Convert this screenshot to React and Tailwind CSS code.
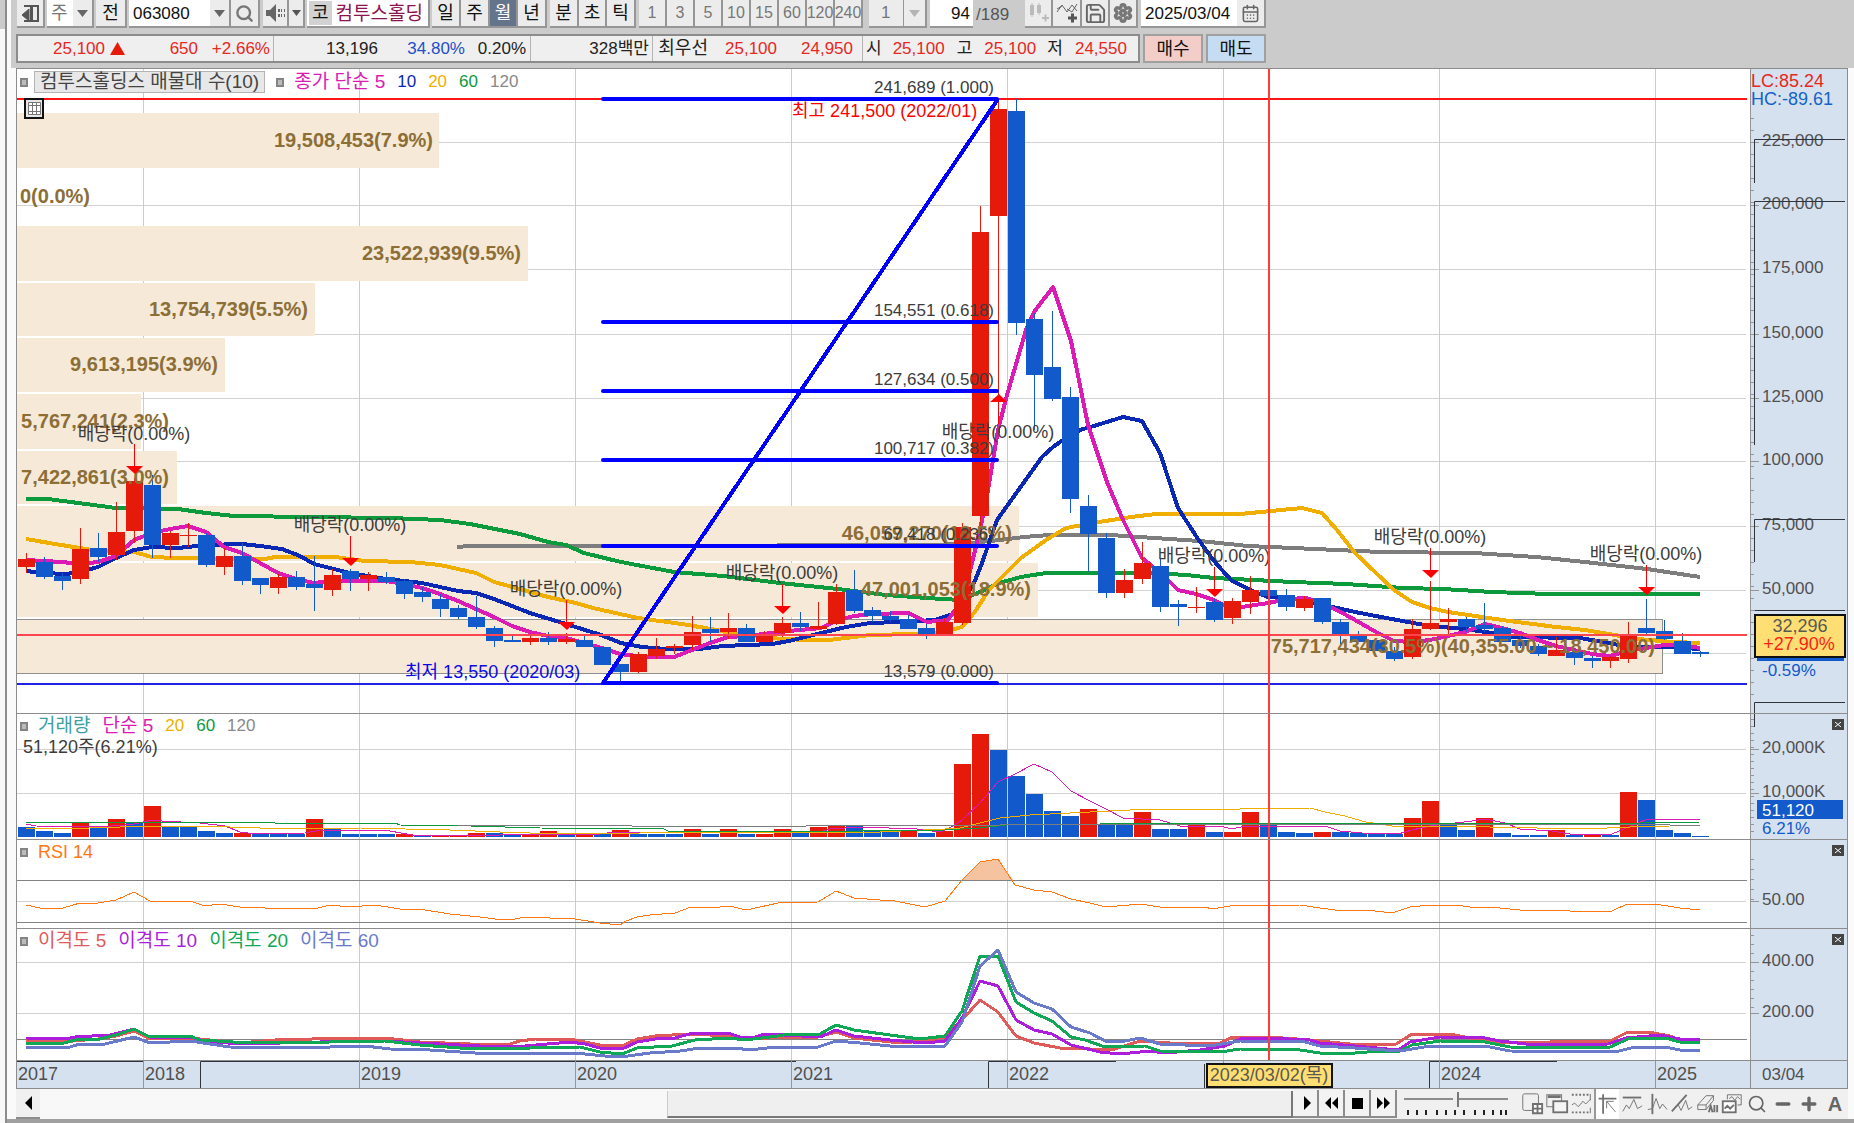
import React from "react";
import clsx from "clsx";
import { Search, Settings, Save, CalendarDays, Minus, Plus } from "lucide-react";

// One bar per month, June 2017 to March 2025
const FIRST_X = 26;
const STEP = 18;
const barX = (i) => FIRST_X + STEP * i;

// The 2023 label is left out because the cursor date covers it
const years = [
  [143, "2018"], [359, "2019"], [575, "2020"], [791, "2021"],
  [1007, "2022"], [1223, ""], [1439, "2024"], [1655, "2025"],
];

// [rising, body top, body bottom, high, low]
const candles = [
  [1, 559, 567, 553, 573], [0, 562, 577, 557, 579], [0, 576, 581, 573, 590], [1, 549, 579, 528, 584],
  [0, 548, 557, 533, 562], [1, 532, 555, 502, 560], [1, 481, 531, 478, 543], [0, 485, 545, 475, 558],
  [1, 533, 545, 531, 558], [1, 535, 536, 523, 547], [0, 535, 565, 533, 567], [1, 556, 567, 548, 575],
  [0, 556, 581, 543, 585], [0, 578, 585, 578, 594], [1, 577, 588, 574, 594], [0, 577, 587, 571, 590],
  [0, 584, 588, 556, 611], [1, 575, 590, 569, 596], [0, 571, 579, 569, 591], [1, 575, 579, 572, 591],
  [0, 577, 582, 572, 584], [0, 581, 594, 579, 599], [0, 592, 597, 587, 602], [0, 599, 609, 594, 617],
  [0, 608, 617, 605, 619], [0, 617, 627, 596, 629], [0, 628, 641, 626, 647], [0, 640, 642, 634, 642],
  [1, 638, 642, 636, 645], [0, 638, 642, 632, 645], [1, 639, 642, 633, 644], [0, 640, 647, 634, 647],
  [0, 647, 665, 647, 665], [0, 664, 672, 664, 682], [1, 654, 672, 652, 673], [1, 649, 656, 638, 659],
  [1, 646, 648, 644, 654], [1, 632, 645, 616, 650], [0, 629, 633, 617, 642], [1, 628, 632, 613, 639],
  [0, 628, 642, 624, 642], [1, 634, 642, 631, 642], [1, 623, 633, 617, 637], [0, 623, 627, 612, 631],
  [1, 626, 629, 602, 630], [1, 592, 624, 584, 625], [0, 590, 611, 570, 613], [0, 610, 616, 607, 622],
  [0, 616, 620, 611, 622], [0, 619, 629, 615, 629], [0, 628, 634, 624, 639], [1, 622, 634, 618, 636],
  [1, 527, 623, 523, 625], [1, 232, 516, 206, 529], [1, 109, 216, 100, 395], [0, 111, 323, 99, 335],
  [0, 319, 375, 313, 430], [0, 367, 399, 311, 401], [0, 397, 499, 387, 513], [0, 506, 534, 495, 572],
  [0, 538, 593, 533, 598], [1, 580, 593, 569, 598], [1, 563, 579, 542, 584], [0, 566, 607, 559, 612],
  [0, 604, 607, 600, 626], [1, 607, 608, 587, 613], [0, 602, 620, 599, 622], [1, 601, 618, 598, 624],
  [1, 590, 602, 576, 614], [0, 590, 596, 575, 603], [0, 595, 607, 589, 611], [1, 599, 608, 596, 611],
  [0, 598, 622, 598, 624], [0, 622, 636, 619, 644], [0, 634, 642, 631, 642], [0, 640, 651, 640, 651],
  [0, 651, 659, 647, 661], [1, 629, 657, 619, 659], [1, 623, 629, 581, 630], [1, 619, 622, 608, 634],
  [0, 619, 627, 617, 632], [0, 625, 629, 603, 632], [0, 628, 642, 626, 642], [0, 640, 646, 635, 648],
  [0, 646, 654, 644, 656], [1, 650, 656, 637, 656], [0, 652, 658, 650, 665], [0, 658, 661, 656, 668],
  [1, 657, 661, 656, 668], [1, 634, 659, 622, 663], [0, 628, 633, 599, 636], [0, 631, 639, 620, 640],
  [0, 641, 654, 633, 654], [0, 652, 654, 651, 657],
];

// [rising, bar top]
const volumes = [
  [0, 827], [0, 831], [0, 833], [1, 822], [0, 826], [1, 819], [0, 822], [1, 806], [0, 827], [0, 827],
  [0, 831], [0, 833], [1, 833], [0, 833], [0, 834], [0, 834], [1, 819], [0, 828], [0, 834], [0, 834],
  [0, 834], [1, 834], [0, 835], [1, 835], [1, 835], [1, 833], [0, 833], [0, 834], [1, 834], [1, 831],
  [0, 834], [1, 834], [0, 834], [1, 830], [0, 834], [0, 834], [0, 834], [1, 829], [0, 834], [1, 829],
  [0, 834], [1, 834], [1, 829], [0, 832], [1, 827], [1, 825], [0, 825], [0, 831], [0, 830], [1, 831],
  [0, 833], [1, 831], [1, 764], [1, 734], [0, 750], [0, 776], [0, 794], [0, 811], [0, 816], [1, 809],
  [0, 824], [0, 824], [1, 812], [0, 829], [0, 829], [1, 824], [0, 832], [1, 832], [1, 812], [0, 824],
  [0, 832], [0, 833], [1, 832], [0, 832], [0, 833], [0, 834], [0, 834], [1, 818], [1, 801], [0, 824],
  [0, 830], [1, 818], [0, 833], [0, 835], [0, 835], [1, 830], [0, 835], [1, 834], [0, 835], [1, 792],
  [0, 800], [0, 830], [0, 833], [0, 836],
];

const priceAverages = [
  { stroke: "#7d7d7d", points: "457,547 470,546 620,546 935,545 970,543 1000,540 1024,537 1050,535 1110,535 1140,537 1169,539 1200,541 1248,546 1315,549 1381,552 1474,553 1536,557 1585,562 1647,569 1700,577" },
  { stroke: "#0d9a3c", points: "26,499 48,499 116,508 178,509 206,513 234,516 390,518 440,520 470,524 520,534 548,542 566,545 584,553 621,562 674,572 723,576 780,583 838,589 886,595 927,598 960,600 980,592 999,583 1021,577 1046,573 1152,573 1186,575 1214,578 1293,582 1346,584 1403,588 1443,589 1492,592 1549,594 1700,594" },
  { stroke: "#f0ae00", points: "26,539 55,544 80,548 98,551 134,552 152,557 175,558 242,559 265,559 275,557 335,557 365,561 410,562 440,565 476,573 494,582 520,589 548,597 576,603 593,608 638,618 682,624 711,629 731,633 768,638 805,640 829,640 870,635 915,634 944,632 962,627 974,613 989,590 999,580 1021,558 1046,540 1066,528 1099,522 1131,517 1156,514 1240,514 1302,508 1322,513 1337,530 1355,553 1376,573 1394,590 1412,602 1430,608 1448,612 1502,620 1556,627 1585,630 1603,633 1638,639 1673,642 1700,643" },
  { stroke: "#0a28b4", points: "26,571 44,573 66,574 80,572 98,567 116,558 134,550 152,547 178,548 206,545 242,544 260,546 282,549 300,556 314,564 350,573 386,579 422,583 458,591 476,593 494,599 530,613 566,624 601,635 621,643 642,647 666,649 699,649 723,646 772,644 789,641 821,633 846,627 870,623 899,622 935,620 956,613 974,583 982,563 989,543 997,520 1017,492 1042,457 1053,447 1063,440 1080,430 1097,425 1123,417 1142,421 1160,453 1178,508 1198,539 1214,561 1231,580 1250,590 1268,597 1293,598 1324,605 1355,612 1381,617 1408,622 1430,626 1465,629 1492,633 1514,637 1580,638 1603,642 1629,647 1669,647 1700,649" },
  { stroke: "#dc1ab4", points: "26,560 62,562 80,564 98,562 116,556 134,540 152,533 170,529 188,526 206,532 224,547 242,553 260,563 278,573 296,579 314,583 332,581 386,581 404,584 422,588 440,594 458,601 476,609 494,617 512,626 530,632 548,636 566,638 584,643 602,648 620,654 646,657 674,657 692,650 710,643 728,637 746,636 789,631 821,628 838,620 854,616 872,614 908,613 919,618 927,622 948,620 962,600 970,571 980,530 988,490 998,430 1007,395 1026,330 1034,312 1053,287 1071,341 1088,425 1107,482 1123,520 1142,558 1152,566 1170,582 1178,590 1196,594 1214,600 1226,606 1242,607 1268,603 1288,599 1306,598 1319,602 1337,610 1355,620 1376,632 1394,641 1412,642 1430,640 1448,636 1465,632 1485,624 1502,628 1520,633 1538,640 1556,646 1574,650 1592,654 1610,656 1628,651 1646,648 1664,645 1682,645 1700,648" },
];

const volumeAverages = [
  { stroke: "#dc1ab4", points: "26,824 36,826 98,827 125,825 134,824 152,820 162,821 200,823 225,826 240,832 255,834 305,833 320,830 390,831 412,835 500,835 600,834 615,832 700,832 820,832 830,829 860,827 917,829 940,832 948,829 962,820 980,803 998,782 1015,774 1034,764 1052,772 1071,791 1090,801 1106,809 1123,818 1160,820 1180,826 1220,826 1232,829 1245,826 1325,826 1340,831 1362,833 1398,834 1412,830 1430,826 1472,821 1485,819 1505,823 1520,829 1552,831 1570,834 1612,834 1626,828 1645,820 1655,819 1700,819" },
  { stroke: "#f0ae00", points: "26,829 90,828 150,826 200,826 260,828 360,828 450,830 500,832 560,834 640,833 800,832 880,832 945,829 960,828 980,823 1000,818 1030,815 1070,813 1130,810 1240,809 1310,808 1325,812 1345,816 1355,819 1366,822 1392,826 1490,827 1584,829 1630,827 1670,826" },
  { stroke: "#0d9a3c", points: "26,822 270,822 275,823 395,823 400,825 470,826 540,828 664,829 668,831 860,831 945,830 980,828 1005,825 1100,824 1640,823 1700,822" },
  { stroke: "#7d7d7d", points: "458,825 628,825 632,826 806,826 812,825 1000,825 1300,824 1640,824 1700,826" },
];

const rsi = [
  { stroke: "#ff7814", points: "26,905 40,908 63,908 80,903 98,903 116,900 134,892 150,901 190,901 205,906 220,904 240,907 265,908 318,908 330,905 350,907 375,905 400,909 425,910 450,914 480,917 495,919 515,919 525,917 575,919 600,923 620,925 626,921 637,917 650,915 675,913 691,907 720,907 730,906 746,910 760,907 778,903 818,902 836,891 854,898 880,900 895,901 925,907 945,901 962,880 980,862 998,859 1015,885 1034,890 1052,892 1071,899 1090,903 1106,907 1140,904 1160,907 1205,907 1212,909 1230,906 1300,905 1320,908 1335,910 1367,910 1392,913 1410,907 1430,905 1456,905 1470,907 1500,908 1530,911 1550,910 1590,912 1612,911 1627,904 1655,904 1680,908 1700,910" },
];

const disparity = [
  { stroke: "#e05a5a", points: "26,1040 60,1042 98,1039 116,1036 134,1031 150,1039 190,1038 240,1043 275,1040 350,1038 385,1038 420,1042 470,1044 510,1044 520,1041 535,1039 575,1040 600,1045 622,1046 637,1039 655,1036 690,1034 730,1036 746,1039 790,1037 818,1037 836,1032 854,1038 900,1043 925,1041 945,1037 962,1020 980,1000 998,1012 1016,1036 1034,1043 1060,1048 1090,1049 1115,1049 1140,1041 1170,1043 1220,1043 1233,1037 1270,1037 1310,1040 1350,1044 1396,1044 1412,1034 1450,1034 1470,1038 1500,1042 1550,1042 1610,1041 1628,1032 1648,1032 1670,1036 1680,1040 1700,1040" },
  { stroke: "#aa1edc", points: "26,1038 65,1039 75,1037 110,1035 134,1029 150,1037 190,1037 205,1041 240,1044 320,1042 385,1041 420,1043 480,1046 525,1046 570,1042 585,1044 600,1048 622,1049 637,1042 655,1039 675,1038 693,1033 728,1033 740,1037 755,1037 765,1034 820,1037 836,1030 854,1036 890,1040 925,1043 945,1041 962,1018 980,981 998,986 1016,1020 1034,1030 1052,1034 1071,1045 1100,1052 1120,1054 1150,1051 1165,1053 1200,1050 1225,1046 1240,1039 1268,1038 1310,1040 1320,1043 1366,1047 1398,1050 1410,1042 1440,1037 1485,1038 1500,1041 1535,1045 1608,1044 1626,1038 1660,1035 1680,1039 1700,1040" },
  { stroke: "#10a854", points: "26,1043 60,1044 75,1040 100,1039 116,1035 134,1029 150,1037 190,1036 200,1040 250,1043 330,1042 385,1041 420,1045 460,1048 530,1048 580,1047 600,1052 622,1054 637,1048 672,1046 695,1040 730,1038 745,1040 770,1037 790,1034 820,1034 836,1025 854,1030 890,1035 920,1039 945,1036 962,1011 980,956 998,956 1016,1002 1034,1013 1052,1021 1071,1037 1085,1040 1105,1047 1145,1046 1160,1051 1220,1052 1240,1049 1300,1050 1320,1053 1355,1053 1380,1051 1400,1051 1412,1045 1440,1041 1485,1042 1510,1047 1608,1048 1630,1038 1665,1038 1680,1042 1700,1043" },
  { stroke: "#6a7acb", points: "26,1047 70,1047 80,1044 105,1044 134,1037 150,1043 190,1041 230,1047 320,1048 340,1046 365,1046 390,1049 430,1050 475,1053 575,1053 605,1056 628,1056 650,1053 680,1051 700,1048 735,1048 750,1050 775,1047 818,1047 836,1041 860,1043 890,1046 945,1046 962,1022 980,966 998,950 1016,992 1034,1003 1052,1009 1071,1027 1090,1033 1105,1041 1125,1041 1140,1038 1160,1044 1210,1046 1240,1041 1305,1042 1320,1046 1355,1048 1400,1051 1430,1046 1485,1046 1510,1051 1615,1052 1635,1047 1665,1047 1680,1050 1700,1050" },
];

// Volume by price: row top, height, right edge, label end, label
const bands = [
  [113, 55, 439, 433, "19,508,453(7.9%)"],
  [226, 55, 528, 521, "23,522,939(9.5%)"],
  [283, 53, 315, 308, "13,754,739(5.5%)"],
  [338, 54, 225, 218, "9,613,195(3.9%)"],
  [394, 55, 141, 169, "5,767,241(2.3%)"],
  [451, 53, 177, 169, "7,422,861(3.0%)"],
  [506, 55, 1019, 1012, "46,059,270(18.5%)"],
  [563, 54, 1038, 1031, "47,001,053(18.9%)"],
];

const fibLevels = [
  [99, "241,689 (1.000)"],
  [322, "154,551 (0.618)"],
  [391, "127,634 (0.500)"],
  [460, "100,717 (0.382)"],
  [546, "67,418 (0.236)"],
  [683, "13,579 (0.000)"],
];

// Ex-dividend marks: x, text baseline, arrow tip
const dividends = [
  [134, 440, 474], [350, 531, 566], [566, 595, 630], [782, 579, 614],
  [1214, 562, 597], [1430, 543, 578], [1646, 560, 595],
];

const RED = "#e61a0a";
const BLUE = "#125acb";

function Lines({ series, width }) {
  return (
    <g fill="none" strokeWidth={width} strokeLinejoin="round" shapeRendering="crispEdges">
      {series.map((s) => (
        <polyline key={s.stroke} points={s.points} stroke={s.stroke} />
      ))}
    </g>
  );
}

// A pane is the plot on the left and its price scale on the right
function Pane({ top, height, grid, legend, scale, closable, children }) {
  return (
    <section className="relative flex bg-white">
      <svg viewBox={`16 ${top} 1734 ${height}`} className="block h-auto min-w-0 flex-1">
        <g shapeRendering="crispEdges">
          {grid.map((y) => (
            <rect key={y} x="16" y={y} width="1730" height="1" fill="#d2d2d2" />
          ))}
          {years.map(([x]) => (
            <rect key={x} x={x} y={top} width="1" height={height} fill="#cccccc" />
          ))}
        </g>
        {children}
        <rect x="1268" y={top} width="2" height={height} fill="#ff3c3c" />
        <rect x="16" y={top} width="1" height={height} fill="#8c8c8c" />
        <rect x="16" y={top + height - 1} width="1734" height="1" fill="#8c8c8c" />
      </svg>
      <svg
        viewBox={`1750 ${top} 98 ${height}`}
        className="block w-[98px] shrink-0 bg-[#d6e1ef]"
        preserveAspectRatio="xMinYMin"
      >
        {scale}
        <rect x="1749" y={top} width="2" height={height} fill="#969696" />
        <rect x="1847" y={top} width="1" height={height} fill="#8c8c8c" />
        <rect x="1750" y={top + height - 1} width="98" height="1" fill="#8c8c8c" />
      </svg>
      <div className="absolute left-[4px] top-[2px] flex items-center text-[19px] leading-[20px] whitespace-nowrap">
        {legend}
      </div>
      {closable && (
        <button
          type="button"
          aria-label="닫기"
          className="absolute right-[4px] top-[5px] flex h-[11px] w-[12px] items-center justify-center bg-[#444]"
        >
          <svg width="6" height="5" viewBox="0 0 6 5" stroke="#fff">
            <path d="M0 0l6 5M6 0L0 5" />
          </svg>
        </button>
      )}
    </section>
  );
}

function Ticks({ major, from, to, step }) {
  const minor = [];
  for (let y = from; y < to; y += step) minor.push(y);
  return (
    <g fill="#969696">
      {minor.map((y) => (
        <rect key={y} x="1750" y={y} width="4" height="1" />
      ))}
      {major.map(([y, label]) => (
        <g key={label}>
          <rect x="1750" y={y} width="9" height="1" />
          <text x="1762" y={y + 4} fill="#505050" className="text-[17px]">
            {label}
          </text>
        </g>
      ))}
    </g>
  );
}

const Marker = () => <span className="mr-[10px] h-[9px] w-[8px] border-2 border-[#848484] bg-[#bbb]" />;

function Arrow({ x, y }) {
  return (
    <g fill="#ff0000">
      <rect x={x} y={y - 30} width="1" height="24" />
      <path d={`M${x - 8} ${y - 8}h17l-8 8z`} />
    </g>
  );
}

function PricePane() {
  return (
    <Pane
      top={69}
      height={645}
      grid={[142, 205, 269, 334, 398, 461, 526, 590, 653]}
      legend={
        <>
          <Marker />
          <span className="-ml-[4px] mr-[11px] border border-[#b4b4b4] bg-[#e8e8e8] px-[5px] text-[#444]">
            컴투스홀딩스 매물대 수(10)
          </span>
          <Marker />
          <span className="mr-[12px] text-[#dc1ab4]">종가 단순 5</span>
          <span className="mr-[12px] text-[17px] text-[#0a28b4]">10</span>
          <span className="mr-[12px] text-[17px] text-[#f0ae00]">20</span>
          <span className="mr-[12px] text-[17px] text-[#0d9a3c]">60</span>
          <span className="text-[17px] text-[#888]">120</span>
        </>
      }
      scale={
        <>
          <text x="1751" y="87" fill="#e6281e" className="text-[18px]">LC:85.24</text>
          <text x="1751" y="105" fill="#1464c8" className="text-[18px]">HC:-89.61</text>
          <Ticks
            from={118}
            to={700}
            step={12}
            major={[
              [142, "225,000"], [205, "200,000"], [269, "175,000"], [334, "150,000"], [398, "125,000"],
              [461, "100,000"], [526, "75,000"], [590, "50,000"],
            ]}
          />
          <path
            d="M1845 139.500H1754.500V183M1845 201.500H1754.500V445M1845 519.500H1754.500V562M1845 610.500H1754.500M1845 702.500H1754.500V714"
            fill="none"
            stroke="#30343c"
          />
          <rect x="1757" y="640" width="87" height="21" fill={BLUE} />
          <text x="1762" y="676" fill={BLUE} className="text-[17px]">-0.59%</text>
          <rect x="1755" y="615" width="90" height="42" fill="#ffdf73" stroke="#111" strokeWidth="2" />
          <text x="1800" y="632" textAnchor="middle" fill="#5a5a50" className="text-[18px]">32,296</text>
          <text x="1799" y="650" textAnchor="middle" fill="#ff1e14" className="text-[18px]">+27.90%</text>
        </>
      }
    >
      <g shapeRendering="crispEdges">
        {bands.map(([y, h, right]) => (
          <rect key={y} x="17" y={y} width={right - 17} height={h} fill="#f6e9d7" />
        ))}
        <rect x="16.500" y="619.500" width="1646" height="54" fill="#f6e9d7" stroke="#8e8e8e" />
        <rect x="17" y="98" width="1730" height="2" fill="#ff1414" />
        <rect x="17" y="683" width="1730" height="2" fill="#2323e6" />
      </g>
      <Lines series={priceAverages} width={4} />
      <g shapeRendering="crispEdges">
        {candles.map(([up, top, bottom, high, low], i) => (
          <g key={i} fill={up ? RED : BLUE}>
            <rect x={barX(i)} y={high} width="1" height={low - high} />
            <rect x={barX(i) - 8} y={top} width="17" height={bottom - top} />
          </g>
        ))}
        <rect x="17" y="634" width="1730" height="2" fill="#ff4650" />
      </g>
      {bands.map(([y, h, , end, label]) => (
        <text key={y} x={end} y={y + h / 2 + 6} textAnchor="end" fill="#8c6e37" className="text-[20px] font-bold">
          {label}
        </text>
      ))}
      <text x="20" y="203" fill="#8c6e37" className="text-[20px] font-bold">0(0.0%)</text>
      <text x="1655" y="653" textAnchor="end" fill="#8c6e37" className="text-[20px] font-bold">
        75,717,434(30.5%)(40,355.00 ~ 18,450.00)
      </text>
      <g fill="#3c3c3c">
        {fibLevels.map(([y, label]) => (
          <g key={y}>
            <rect x="601" y={y - 2} width="398" height="4" rx="2" fill="#0000ff" />
            <text x="994" y={y - 6} textAnchor="end" className="text-[17px]">{label}</text>
          </g>
        ))}
      </g>
      <path d="M603 683L998 99" stroke="#0000ff" strokeWidth="4" shapeRendering="crispEdges" />
      <text x="792" y="117" fill="#ff0000" className="text-[18px]">최고 241,500 (2022/01)</text>
      <text x="405" y="678" fill="#0a0ae6" className="text-[18px]">최저 13,550 (2020/03)</text>
      {dividends.map(([x, y, tip]) => (
        <g key={x}>
          <text x={x} y={y} textAnchor="middle" fill="#3c3c3c" className="text-[18px]">배당락(0.00%)</text>
          <Arrow x={x} y={tip} />
        </g>
      ))}
      <text x="998" y="438" textAnchor="middle" fill="#3c3c3c" className="text-[18px]">배당락(0.00%)</text>
      <path d="M990 402h17l-8 -8z" fill="#ff0000" />
      <rect x="998" y="400" width="1" height="24" fill="#ff0000" />
      <g fill="#fff" stroke="#777">
        <rect x="25" y="99" width="18" height="19" fill="#e6e6e6" stroke="#111" strokeWidth="2" />
        <path d="M28.500 102.500h12v12h-12zM28.500 105.500h12M28.500 111.500h12M32.500 102.500v12M36.500 102.500v12" />
      </g>
    </Pane>
  );
}

function VolumePane() {
  return (
    <Pane
      top={714}
      height={126}
      grid={[749, 793]}
      closable
      legend={
        <>
          <Marker />
          <span className="mr-[12px] text-[#3ca0a0]">거래량</span>
          <span className="mr-[12px] text-[#dc1ab4]">단순 5</span>
          <span className="mr-[12px] text-[17px] text-[#f0ae00]">20</span>
          <span className="mr-[12px] text-[17px] text-[#0d9a3c]">60</span>
          <span className="text-[17px] text-[#888]">120</span>
        </>
      }
      scale={
        <>
          <Ticks from={719} to={836} step={7} major={[[749, "20,000K"], [793, "10,000K"]]} />
          <path d="M1754.500 714V727" stroke="#30343c" />
          <rect x="1757" y="800" width="86" height="19" fill={BLUE} />
          <text x="1762" y="816" fill="#fff" className="text-[17px]">51,120</text>
          <text x="1762" y="834" fill={BLUE} className="text-[17px]">6.21%</text>
        </>
      }
    >
      <g shapeRendering="crispEdges">
        {volumes.map(([up, top], i) => (
          <rect key={i} x={barX(i) - 8} y={top} width="17" height={837 - top} fill={up ? RED : BLUE} />
        ))}
      </g>
      <Lines series={volumeAverages} width={1} />
      <text x="23" y="753" fill="#3c3c3c" className="text-[18px]">51,120주(6.21%)</text>
    </Pane>
  );
}

function RsiPane() {
  return (
    <Pane
      top={840}
      height={89}
      grid={[901]}
      closable
      legend={
        <>
          <Marker />
          <span className="text-[18px] text-[#ff7814]">RSI 14</span>
        </>
      }
      scale={<Ticks from={859} to={900} step={10} major={[[901, "50.00"]]} />}
    >
      <path d="M962 880L980 862L998 859L1013 880z" fill="#f5c3a0" />
      <rect x="17" y="880" width="1730" height="1" fill="#828282" />
      <rect x="17" y="922" width="1730" height="1" fill="#828282" />
      <Lines series={rsi} width={1} />
    </Pane>
  );
}

function DisparityPane() {
  return (
    <Pane
      top={929}
      height={132}
      grid={[962, 1013]}
      closable
      legend={
        <>
          <Marker />
          <span className="mr-[12px] text-[#e05a5a]">이격도 5</span>
          <span className="mr-[12px] text-[#aa1edc]">이격도 10</span>
          <span className="mr-[12px] text-[#10a854]">이격도 20</span>
          <span className="text-[#6a7acb]">이격도 60</span>
        </>
      }
      scale={<Ticks from={935} to={1010} step={9} major={[[962, "400.00"], [1013, "200.00"]]} />}
    >
      <rect x="17" y="1039" width="1730" height="1" fill="#828282" />
      <Lines series={disparity} width={3} />
    </Pane>
  );
}

function TimeAxis() {
  return (
    <div className="flex bg-[#d6e1ef]">
      <svg viewBox="16 1061 1734 28" className="block h-auto min-w-0 flex-1 text-[18px]">
        <path d="M16 1061.500H143M200.500 1089V1061.500H796M988.500 1089V1061.500H1116M1204.500 1089V1064M1429.500 1089V1061.500H1557" fill="none" stroke="#30343c" />
        {years.map(([x, label]) => (
          <g key={x}>
            <rect x={x} y="1061" width="1" height="28" fill="#969696" />
            {label && <text x={x + 2} y="1080" fill="#505050">{label}</text>}
          </g>
        ))}
        <text x="18" y="1080" fill="#505050">2017</text>
        <rect x="16" y="1061" width="1" height="28" fill="#8c8c8c" />
        <rect x="16" y="1088" width="1734" height="1" fill="#8c8c8c" />
        <rect x="1207" y="1064" width="125" height="23" fill="#ffdf73" stroke="#111" strokeWidth="2" />
        <text x="1269" y="1081" textAnchor="middle" fill="#5a5a50">2023/03/02(목)</text>
      </svg>
      <div className="flex w-[98px] shrink-0 items-center border-b border-l border-r border-[#8c8c8c] pl-[11px] text-[17px] text-[#505050]">
        03/04
      </div>
    </div>
  );
}

function ToolButton({ className, active, children, ...props }) {
  return (
    <button
      type="button"
      className={clsx(
        "flex h-[28px] shrink-0 items-center justify-center border-b-2 border-r-2 border-[#969696] leading-none",
        active ? "bg-[#64748a] text-white" : "bg-[#ececec]",
        className
      )}
      {...props}
    >
      {children}
    </button>
  );
}

const Down = ({ color = "#666" }) => (
  <svg width="11" height="8" viewBox="0 0 11 8">
    <path d="M0 1h11L5.500 8z" fill={color} />
  </svg>
);

function Toolbar() {
  return (
    <header className="flex h-[34px] items-start pl-[6px] text-[18px]">
      <ToolButton className="w-[28px]" aria-label="목록">
        <svg width="18" height="19" viewBox="0 0 18 19" fill="none" stroke="#555">
          <path d="M3 2h14v15H3" strokeWidth="2" />
          <path d="M10.500 2v15" strokeWidth="3" />
          <path d="M8 5L1 11l7 6z" fill="#555" />
        </svg>
      </ToolButton>
      <select aria-label="종목 구분" className="ml-[2px] h-[28px] w-[26px] appearance-none border-b-2 border-[#969696] bg-white px-[4px] text-[18px] text-[#777]">
        <option>주</option>
      </select>
      <ToolButton className="w-[21px]" aria-label="구분 열기"><Down /></ToolButton>
      <ToolButton className="ml-[2px] w-[31px]">전</ToolButton>
      <input aria-label="종목 코드" defaultValue="063080" className="ml-[2px] h-[28px] w-[81px] border-b-2 border-[#969696] bg-white px-[4px] pt-[2px] text-[17px]" />
      <ToolButton className="w-[21px]" aria-label="최근 종목"><Down /></ToolButton>
      <ToolButton className="w-[29px]" aria-label="종목 찾기"><Search size={19} color="#777" strokeWidth={3} /></ToolButton>
      <ToolButton className="ml-[3px] w-[26px]" aria-label="소리">
        <svg width="20" height="20" viewBox="0 0 20 20" fill="#666">
          <path d="M1 7h4l6-6v18l-6-6H1z" />
          <path d="M13 6h2v3h-2zM13 11h2v3h-2zM16 6h1v3h-1zM16 11h1v3h-1zM19 6h1v3h-1zM19 11h1v3h-1z" />
        </svg>
      </ToolButton>
      <ToolButton className="w-[16px]" aria-label="소리 설정">
        <svg width="9" height="6" viewBox="0 0 9 6"><path d="M0 0h9L4.500 6z" fill="#555" /></svg>
      </ToolButton>
      <div className="ml-[2px] flex h-[28px] w-[123px] shrink-0 items-center overflow-hidden whitespace-nowrap border-b-2 border-r-2 border-[#969696] bg-white pl-[2px] leading-none">
        <span className="mr-[4px] bg-[#d2d2d2] p-[3px]">코</span>
        <span className="text-[19px] text-[#8c1450]">컴투스홀딩</span>
      </div>
      <ToolButton className="ml-[2px] w-[29px]">일</ToolButton>
      <ToolButton className="w-[29px]">주</ToolButton>
      <ToolButton className="w-[28px]" active>월</ToolButton>
      <ToolButton className="w-[29px]">년</ToolButton>
      <ToolButton className="ml-[3px] w-[29px]">분</ToolButton>
      <ToolButton className="w-[28px]">초</ToolButton>
      <ToolButton className="w-[29px]">틱</ToolButton>
      <div className="ml-[3px] flex text-[16px] text-[#777]">
        {[1, 3, 5, 10, 15, 60, 120, 240].map((n) => (
          <ToolButton key={n} className="w-[28px]">{n}</ToolButton>
        ))}
      </div>
      <select aria-label="간격" className="ml-[6px] h-[28px] w-[35px] appearance-none border-b-2 border-r border-[#969696] bg-[#ececec] px-[12px] text-[17px] text-[#777]">
        <option>1</option>
      </select>
      <ToolButton className="w-[23px]" aria-label="간격 열기"><Down color="#b4b4b4" /></ToolButton>
      <input aria-label="봉 개수" defaultValue="94" className="ml-[3px] h-[28px] w-[43px] border-b-2 border-[#969696] bg-white pr-[3px] pt-[2px] text-right text-[17px]" />
      <span className="ml-[3px] w-[49px] text-[17px] leading-[29px] text-[#555]">/189</span>
      <ToolButton className="w-[28px]" aria-label="봉 추가">
        <svg width="22" height="22" viewBox="0 0 22 22" fill="#bbb">
          <path d="M3 3h4v10H3zM4.500 1h1v14h-1zM10 3h4v8h-4zM11.500 1h1v12h-1zM15 15h7v2h-7zM17.500 12.500h2v7h-2z" />
        </svg>
      </ToolButton>
      <ToolButton className="w-[29px]" aria-label="지표 추가">
        <svg width="24" height="24" viewBox="0 0 24 24" fill="none" stroke="#666">
          <path d="M2 11L7 4l5 7 5-7 5 6M2 8l5-3M12 8l5 3 5-8" />
          <path d="M13 17h9M17.500 12.500v9" stroke="#555" strokeWidth="3" />
        </svg>
      </ToolButton>
      <ToolButton className="w-[28px]" aria-label="저장"><Save size={23} color="#666" strokeWidth={2} /></ToolButton>
      <ToolButton className="w-[28px]" aria-label="설정"><Settings size={20} color="#777" strokeWidth={4} /></ToolButton>
      <input aria-label="날짜" defaultValue="2025/03/04" className="ml-[3px] h-[28px] w-[96px] border-b-2 border-[#969696] bg-white pl-[4px] pt-[2px] text-[17px]" />
      <ToolButton className="w-[29px]" aria-label="달력"><CalendarDays size={19} color="#666" /></ToolButton>
    </header>
  );
}

function Quote() {
  return (
    <div className="flex h-[34px] items-start pl-[5px] text-[17px]">
      <div className="flex h-[29px] w-[1124px] shrink-0 items-center whitespace-nowrap border-2 border-[#8c8c8c] bg-[#efefef] text-right leading-[25px] text-[#e6281e]">
        <span className="w-[87px]">25,100</span>
        <svg className="ml-[5px]" width="15" height="13" viewBox="0 0 15 13"><path d="M7.500 0L15 13H0z" fill={RED} /></svg>
        <span className="w-[73px]">650</span>
        <span className="w-[76px] border-r border-[#b4b4b4] pr-[3px]">+2.66%</span>
        <span className="w-[104px] text-[#222]">13,196</span>
        <span className="w-[87px] text-[#1e50c8]">34.80%</span>
        <span className="w-[66px] border-r border-[#b4b4b4] pr-[4px] text-[#222]">0.20%</span>
        <span className="w-[122px] border-r border-[#b4b4b4] pr-[3px] text-[#222]">328백만</span>
        <span className="w-[55px] text-[18px] text-[#222]">최우선</span>
        <span className="w-[69px]">25,100</span>
        <span className="w-[86px] border-r border-[#b4b4b4] pr-[9px]">24,950</span>
        <span className="ml-[3px] text-[#222]">시</span>
        <span className="w-[63px]">25,100</span>
        <span className="ml-[12px] text-[#222]">고</span>
        <span className="w-[64px]">25,100</span>
        <span className="ml-[11px] text-[#222]">저</span>
        <span className="w-[64px]">24,550</span>
      </div>
      <button type="button" className="ml-[3px] h-[29px] w-[60px] shrink-0 border-2 border-[#a0a0a0] bg-[#f3cdc8] text-[18px] leading-none">매수</button>
      <button type="button" className="ml-[3px] h-[29px] w-[60px] shrink-0 border-2 border-[#a0a0a0] bg-[#c6dcf2] text-[18px] leading-none">매도</button>
    </div>
  );
}

const tools = [
  ["새 창", <><rect x="3" y="2" width="17" height="18" rx="2" /><path d="M14 13h10v10H14zM14 18h10M19 13v10" strokeWidth="2" fill="#fff" /></>],
  ["창 복사", <><rect x="2" y="3" width="16" height="13" /><rect x="9" y="10" width="15" height="12" fill="#f5f5f5" strokeWidth="2" /><path d="M3 5h14" strokeWidth="3" /></>],
  ["영역 확대", <><path d="M2 3h20M2 22h20" strokeDasharray="2 2" strokeWidth="2" /><path d="M2 14l3-2 4 4 5-6 3 3 5-5M22 2v7M22 17v6" /></>],
  ["기준선", <><path d="M3 7h20M8 2v22" strokeWidth="2" /><path d="M12 10l10 12M12 18v-8h8" /></>],
  ["수평선", <><path d="M3 6h20" strokeWidth="2" /><path d="M3 21l4-7 3 4 5-10 4 10 5-3" /></>],
  ["수직선", <><path d="M8 2v22" strokeWidth="2" /><path d="M3 19l5-1 4-11 4 11 3-5 5 6" /></>],
  ["추세선", <><path d="M2 21L18 3" strokeWidth="2" /><path d="M4 18l5-4 3 6 5-11 3 10 4-3" /></>],
  ["전체 삭제", <><path d="M3 14l9-10h8l-8 10zM3 14v5h9v-5M12 19l8-10V4" /><path d="M15 22l2-7 2 7M21 14v8M24 14v8" strokeWidth="2" /></>],
  ["차트 겹침", <><path d="M8 8V3h15v11h-4M10 7l3-2 3 4 3-4 3 3" /><rect x="3" y="10" width="14" height="12" strokeWidth="2" fill="#fff" /><path d="M5 18l3-3 3 3 4-4" strokeWidth="2" /></>],
];

const playback = [
  ["오른쪽으로", "M8 2v14l7-7z"],
  ["뒤로 감기", "M9 3v12L3 9zM16 3v12l-6-6z"],
  ["정지", "M4 4h11v11H4z"],
  ["앞으로 감기", "M3 3v12l6-6zM10 3v12l6-6z"],
];

function BottomBar() {
  return (
    <footer className="flex h-[30px] items-stretch bg-[#f0f0f0]">
      <button type="button" aria-label="왼쪽으로" className="flex w-[24px] shrink-0 items-center justify-center border-b-2 border-[#8c8c8c] bg-[#f0f0f0]">
        <svg width="7" height="14" viewBox="0 0 7 14"><path d="M7 0v14L0 7z" /></svg>
      </button>
      <div className="flex min-w-0 flex-1 bg-[#f8f8f8] pt-[2px]">
        <div className="ml-auto mb-[1px] w-1/2 border-b-2 border-l border-r-2 border-[#787878] border-l-[#ccc] bg-[#efefef]" />
      </div>
      <div className="flex shrink-0 py-[1px]">
        {playback.map(([label, d]) => (
          <button key={label} type="button" aria-label={label} className="flex w-[26px] items-center justify-center border-b-2 border-r-2 border-[#8c8c8c] bg-[#f3f3f3]">
            <svg width="18" height="18" viewBox="0 0 18 18"><path d={d} /></svg>
          </button>
        ))}
      </div>
      <div className="ml-[7px] flex w-[104px] shrink-0 flex-col pt-[2px]">
        <input
          type="range"
          aria-label="재생 속도"
          defaultValue="50"
          className="h-[16px] w-full appearance-none bg-[linear-gradient(#8c8c8c,#8c8c8c)] bg-[length:100%_2px] bg-center bg-no-repeat [&::-webkit-slider-thumb]:h-[15px] [&::-webkit-slider-thumb]:w-[6px] [&::-webkit-slider-thumb]:appearance-none [&::-webkit-slider-thumb]:border-r-2 [&::-webkit-slider-thumb]:border-[#777] [&::-webkit-slider-thumb]:bg-[#eee]"
        />
        <svg width="104" height="5" viewBox="0 0 104 5" className="mt-[3px]" stroke="#222" strokeWidth="2">
          <path d="M4 0v5M13 0v5M22 0v5M33 0v5M42 0v5M51 0v5M60 0v5M71 0v5M80 0v5M89 0v5M97 0v5M102 0v5" />
        </svg>
      </div>
      <div className="ml-[11px] flex shrink-0 items-center">
        {tools.map(([label, icon], i) => (
          <button key={label} type="button" aria-label={label} className={clsx("flex h-full w-[25px] items-center justify-center", i === 3 && "border-l-2 border-[#999] bg-white")}>
            <svg width="24" height="26" viewBox="0 0 26 26" fill="none" stroke="#707070">{icon}</svg>
          </button>
        ))}
        <button type="button" aria-label="돋보기" className="flex w-[26px] justify-center"><Search size={20} color="#666" /></button>
        <button type="button" aria-label="축소" className="flex w-[26px] justify-center"><Minus size={20} color="#666" strokeWidth={4} /></button>
        <button type="button" aria-label="확대" className="flex w-[26px] justify-center"><Plus size={20} color="#666" strokeWidth={4} /></button>
        <button type="button" className="w-[26px] text-[20px] font-bold leading-none text-[#666]">A</button>
      </div>
    </footer>
  );
}

export default function App() {
  return (
    <div className="flex min-h-screen overflow-hidden bg-[#a0a0a0] font-['Liberation_Sans','Noto_Sans_CJK_KR',sans-serif] text-[#111]">
      <aside className="w-[7px] shrink-0 border-r-2 border-[#8c8c8c] bg-[#f8f8f8]">
        <div className="h-[29px] bg-[#cbcbcb]" />
      </aside>
      <div className="flex min-w-0 flex-1 flex-col bg-[#fafafa]">
        <div className="ml-[4px] flex flex-col bg-[#cbcbcb]">
          <Toolbar />
          <Quote />
        </div>
        <main className="ml-[9px] mr-[6px] flex flex-col border-t border-[#8c8c8c]">
          <PricePane />
          <VolumePane />
          <RsiPane />
          <DisparityPane />
          <TimeAxis />
          <BottomBar />
        </main>
        <div className="mt-auto h-[4px] bg-[#a0a0a0]" />
      </div>
    </div>
  );
}
